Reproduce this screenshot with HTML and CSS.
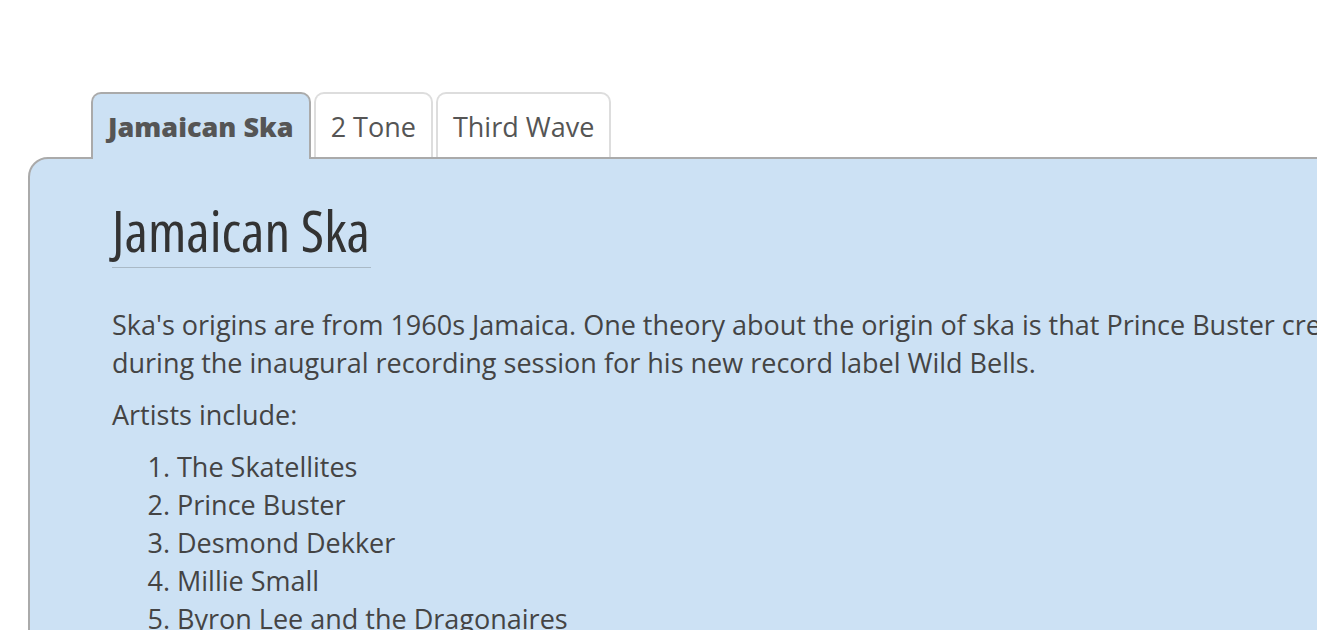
FILE: index.html
```html
<!DOCTYPE html>
<html lang="en">
<head>
<meta charset="utf-8">
<title>Ska</title>
<link rel="stylesheet" href="styles.css">
</head>
<body>
<div class="page">
  <div class="tabs">
    <div class="tab active">Jamaican Ska</div>
    <div class="tab">2 Tone</div>
    <div class="tab">Third Wave</div>
  </div>
  <section class="panel">
    <h1 class="title">Jamaican Ska</h1>
    <p class="text">Ska's origins are from 1960s Jamaica. One theory about the origin of ska is that Prince Buster created it during the inaugural recording session for his new record label Wild Bells.</p>
    <p class="text">Artists include:</p>
    <ol class="list">
      <li>The Skatellites</li>
      <li>Prince Buster</li>
      <li>Desmond Dekker</li>
      <li>Millie Small</li>
      <li>Byron Lee and the Dragonaires</li>
    </ol>
  </section>
</div>
</body>
</html>
```

FILE: styles.css
```css
html, body {
  margin: 0;
  padding: 0;
  overflow: hidden;
  background: #fff;
}
body {
  font-family: "Open Sans", "Liberation Sans", sans-serif;
  color: #444;
}
.page {
  padding: 92px 0 0 28px;
  width: 1600px;
}
.tabs {
  display: flex;
  gap: 3px;
  padding-left: 63px;
  position: relative;
  z-index: 1;
}
.tab {
  box-sizing: border-box;
  height: 65px;
  padding: 0 15px;
  border: 2px solid #ddd;
  border-bottom: none;
  border-radius: 10px 10px 0 0;
  background: #fff;
  font-size: 27px;
  line-height: 66px;
  color: #555;
}
.tab.active {
  height: 67px;
  margin-bottom: -2px;
  padding: 0 15px 0 15px;
  border-color: #aaa;
  background: #cce1f4;
  font-weight: 800;
  font-size: 27px;
}
.panel {
  box-sizing: border-box;
  width: 1520px;
  min-height: 600px;
  background: #cce1f4;
  border: 2px solid #aaa;
  border-radius: 20px 0 0 0;
  padding: 35px 82px 0 82px;
}
.title {
  display: inline-block;
  margin: 0 0 38px 0;
  font-family: "Open Sans", sans-serif;
  font-stretch: 75%;
  font-weight: 500;
  font-size: 57px;
  line-height: 72px;
  color: #333;
  border-bottom: 1px solid #a9b9c6;
  padding: 0 1px 1px 0;
}
.text {
  margin: 0 0 14px 0;
  font-size: 27px;
  line-height: 38px;
  max-width: 1350px;
}
.list {
  margin: 0;
  padding-left: 65px;
  font-size: 27px;
  line-height: 38px;
}
```
